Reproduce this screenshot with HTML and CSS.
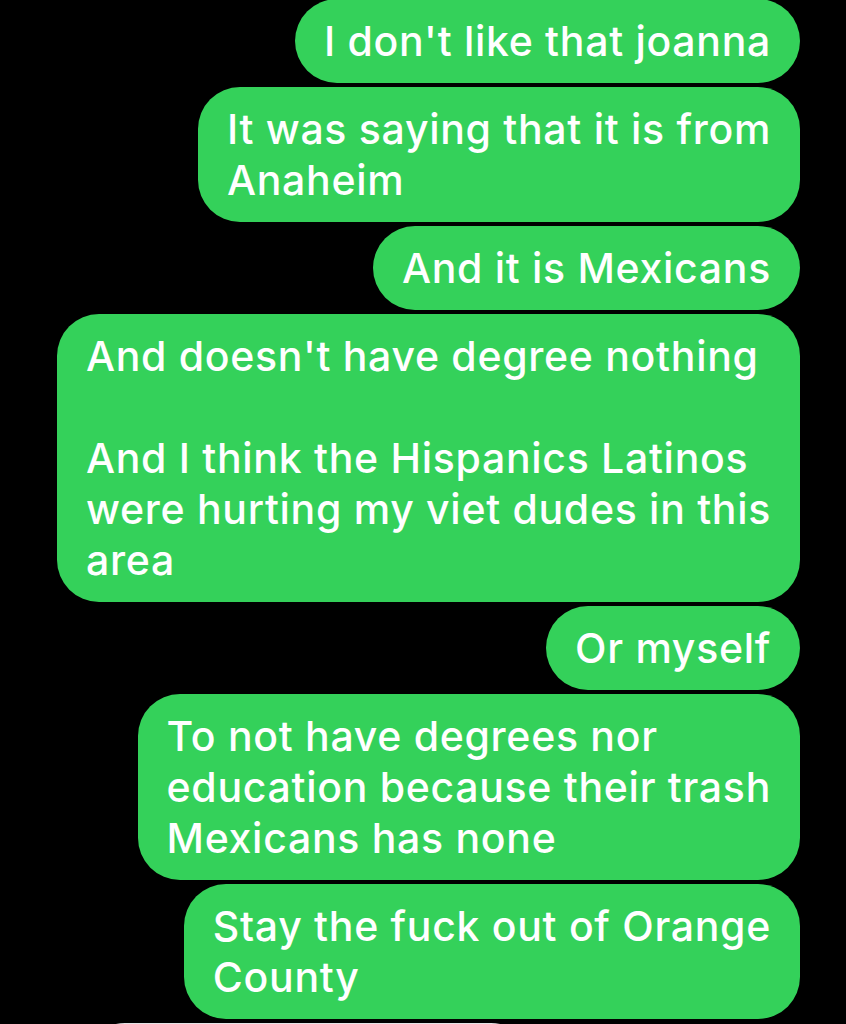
FILE: index.html
```html
<!DOCTYPE html>
<html>
<head>
<meta charset="utf-8">
<link rel="stylesheet" href="styles.css">
</head>
<body>
<div class="thread">
  <div class="bubble sent">I don't like that joanna</div>
  <div class="bubble sent">It was saying that it is from<br>Anaheim</div>
  <div class="bubble sent">And it is Mexicans</div>
  <div class="bubble sent">And doesn't have degree nothing<br><br>And I think the Hispanics Latinos<br>were hurting my viet dudes in this<br>area</div>
  <div class="bubble sent">Or myself</div>
  <div class="bubble sent">To not have degrees nor<br>education because their trash<br>Mexicans has none</div>
  <div class="bubble sent">Stay the fuck out of Orange<br>County</div>
  <div class="bubble received">&nbsp;</div>
</div>
</body>
</html>
```

FILE: styles.css
```css
html, body {
  margin: 0;
  padding: 0;
  background: #000;
  height: 100%;
  overflow: hidden;
}

.thread {
  display: flex;
  flex-direction: column;
  align-items: flex-end;
  gap: 4px;
  margin-top: -1px;
  padding-right: 46px;
  font-family: Inter, "Liberation Sans", sans-serif;
  font-size: 41px;
  font-weight: 500;
  letter-spacing: 0.7px;
  line-height: 51px;
}

.bubble {
  padding: 16.5px 29px;
  border-radius: 42px;
  color: #fff;
  white-space: nowrap;
}

.sent {
  background: #34d15a;
}

.received {
  align-self: flex-start;
  margin-left: 83px;
  width: 392px;
  background: #e4e4e6;
}
```
